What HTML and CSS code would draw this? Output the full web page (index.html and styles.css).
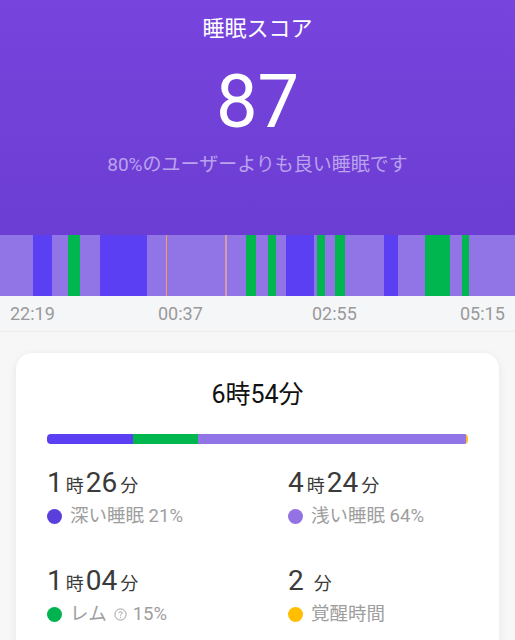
FILE: index.html
```html
<!DOCTYPE html>
<html>
<head>
    <meta charset="utf-8">
    <link rel="stylesheet" href="styles.css">
    <title>睡眠スコア</title>
</head>
<body>
    <div id="header">
        <div id="score_title">睡眠スコア</div>
        <div id="score">87</div>
        <div id="score_note">80%のユーザーよりも良い睡眠です</div>
        <div id="timeline">
            <div class="seg light" style="width:33px"></div>
            <div class="seg deep" style="width:19px"></div>
            <div class="seg light" style="width:16px"></div>
            <div class="seg rem" style="width:12px"></div>
            <div class="seg light" style="width:20px"></div>
            <div class="seg deep" style="width:47px"></div>
            <div class="seg light" style="width:19px"></div>
            <div class="seg awake" style="width:1px"></div>
            <div class="seg light" style="width:58px"></div>
            <div class="seg awake_soft" style="width:2px"></div>
            <div class="seg light" style="width:19px"></div>
            <div class="seg rem" style="width:10px"></div>
            <div class="seg light" style="width:12px"></div>
            <div class="seg rem" style="width:8px"></div>
            <div class="seg light" style="width:10px"></div>
            <div class="seg deep" style="width:28px"></div>
            <div class="seg light" style="width:3px"></div>
            <div class="seg rem" style="width:8px"></div>
            <div class="seg light" style="width:10px"></div>
            <div class="seg rem" style="width:10px"></div>
            <div class="seg light" style="width:39px"></div>
            <div class="seg deep" style="width:14px"></div>
            <div class="seg light" style="width:27px"></div>
            <div class="seg rem" style="width:25px"></div>
            <div class="seg light" style="width:12px"></div>
            <div class="seg rem" style="width:7px"></div>
            <div class="seg light seg_rest"></div>
        </div>
    </div>

    <div id="times">
        <span>22:19</span>
        <span>00:37</span>
        <span>02:55</span>
        <span>05:15</span>
    </div>

    <div class="card">
        <div id="total">6時54分</div>
        <div id="stage_bar">
            <div class="deep" style="width:86px"></div>
            <div class="rem" style="width:65px"></div>
            <div class="light" style="width:268px"></div>
            <div class="awake"></div>
        </div>

        <div id="stats">
            <div class="stat">
                <div class="amount">1<span class="unit">時</span>26<span class="unit">分</span></div>
                <div class="label"><span class="dot dot_deep"></span>深い睡眠 21%</div>
            </div>
            <div class="stat">
                <div class="amount">4<span class="unit">時</span>24<span class="unit">分</span></div>
                <div class="label"><span class="dot dot_light"></span>浅い睡眠 64%</div>
            </div>
            <div class="stat">
                <div class="amount">1<span class="unit">時</span>04<span class="unit">分</span></div>
                <div class="label"><span class="dot dot_rem"></span>レム
                    <svg class="help" width="13" height="13" viewBox="0 0 13 13">
                        <circle cx="6.5" cy="6.5" r="5.6" fill="none" stroke="#9e9e9e" stroke-width="1"/>
                        <path d="M4.8 5.2 C4.8 3.3 8.2 3.3 8.2 5.1 C8.2 6.3 6.5 6.3 6.5 7.6" fill="none" stroke="#9e9e9e" stroke-width="1"/>
                        <circle cx="6.5" cy="9.3" r="0.6" fill="#9e9e9e"/>
                    </svg>
                    15%</div>
            </div>
            <div class="stat">
                <div class="amount">2 <span class="unit">分</span></div>
                <div class="label"><span class="dot dot_awake"></span>覚醒時間</div>
            </div>
        </div>
    </div>
</body>
</html>
```

FILE: styles.css
```css
body
{
    margin:0;
    background-color:#f7f7f7;
    font-family:Roboto, "Noto Sans CJK JP", sans-serif;
    overflow:hidden;
}

#header
{
    background:linear-gradient(#7744dd, #6a3cd0);
    color:white;
    text-align:center;
    padding-top:14px;
}
#score_title
{
    font-size:22px;
    line-height:30px;
}
#score
{
    font-size:74px;
    line-height:74px;
    margin-top:21px;
}
#score_note
{
    font-size:19px;
    line-height:24px;
    margin-top:14px;
    color:#baa2ee;
}

#timeline
{
    display:flex;
    height:61px;
    margin-top:58px;
}
.seg
{
    flex-shrink:0;
}
.seg_rest
{
    flex:1;
}
.light { background-color:#9174e5; }
.deep { background-color:#5b3ff2; }
.rem { background-color:#00b74f; }
.awake { background-color:#f3a25c; }
.awake_soft { background-color:#d79aa8; }

#times
{
    display:grid;
    grid-template-columns:148px 154px 148px auto;
    padding-left:10px;
    height:35px;
    line-height:35px;
    background-color:#f5f6f8;
    border-bottom:1px solid #ececec;
    color:#9a9a9a;
    font-size:18px;
}

.card
{
    margin:21px 16px 0 16px;
    background-color:white;
    border-radius:16px;
    box-shadow:0 2px 10px rgba(0,0,0,0.07);
    padding:25px 31px 40px 31px;
}
#total
{
    text-align:center;
    font-size:25px;
    line-height:34px;
    color:#111;
}
#stage_bar
{
    display:flex;
    height:10px;
    margin-top:22px;
    border-radius:4px;
    overflow:hidden;
}
#stage_bar div
{
    flex-shrink:0;
}
#stage_bar .awake
{
    flex:1;
    background-color:#ffbf1a;
}

#stats
{
    display:grid;
    grid-template-columns:241px 1fr;
    row-gap:36px;
    margin-top:22px;
}
.amount
{
    font-size:28px;
    line-height:34px;
    color:#3a3a3a;
}
.unit
{
    font-size:18px;
    margin:0 2px 0 3px;
}
.label
{
    display:flex;
    align-items:center;
    margin-top:1px;
    font-size:18.5px;
    line-height:24px;
    color:#9e9e9e;
}
.dot
{
    width:15px;
    height:15px;
    border-radius:50%;
    margin-right:8px;
}
.dot_deep { background-color:#5b3fdc; }
.dot_light { background-color:#9373e4; }
.dot_rem { background-color:#00b34f; }
.dot_awake { background-color:#ffbf00; }
.help
{
    margin:0 6px 0 7px;
}
```
